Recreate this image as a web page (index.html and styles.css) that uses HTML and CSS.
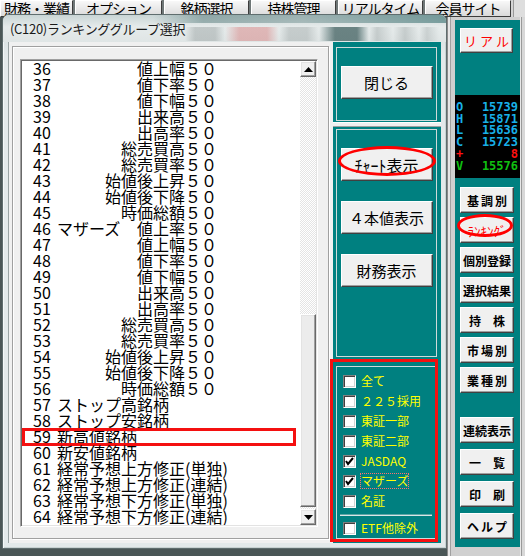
FILE: index.html
```html
<!DOCTYPE html>
<html lang="ja">
<head>
<meta charset="utf-8">
<title>ランキンググループ選択</title>
<link rel="stylesheet" href="styles.css">
</head>
<body>
<div class="menubar">
  <div class="tab t1">財務・業績</div>
  <div class="tab t2">オプション</div>
  <div class="tab t3">銘柄選択</div>
  <div class="tab t4">持株管理</div>
  <div class="tab t5">リアルタイム</div>
  <div class="tab t6">会員サイト</div>
</div>
<div class="main">
  <div class="desk">
    <div class="dialog">
      <div class="titlebar"><span class="title">(C120)ランキンググループ選択</span></div>
      <div class="client">
        <div class="leftpane">
          <div class="groove">
            <div class="listbox">
              <div class="items">
                <div class="row"><span class="num">36</span><span class="field"><span></span><span>値上幅５０</span></span></div>
                <div class="row"><span class="num">37</span><span class="field"><span></span><span>値下率５０</span></span></div>
                <div class="row"><span class="num">38</span><span class="field"><span></span><span>値下幅５０</span></span></div>
                <div class="row"><span class="num">39</span><span class="field"><span></span><span>出来高５０</span></span></div>
                <div class="row"><span class="num">40</span><span class="field"><span></span><span>出高率５０</span></span></div>
                <div class="row"><span class="num">41</span><span class="field"><span></span><span>総売買高５０</span></span></div>
                <div class="row"><span class="num">42</span><span class="field"><span></span><span>総売買率５０</span></span></div>
                <div class="row"><span class="num">43</span><span class="field"><span></span><span>始値後上昇５０</span></span></div>
                <div class="row"><span class="num">44</span><span class="field"><span></span><span>始値後下降５０</span></span></div>
                <div class="row"><span class="num">45</span><span class="field"><span></span><span>時価総額５０</span></span></div>
                <div class="row"><span class="num">46</span><span class="field"><span>マザーズ</span><span>値上率５０</span></span></div>
                <div class="row"><span class="num">47</span><span class="field"><span></span><span>値上幅５０</span></span></div>
                <div class="row"><span class="num">48</span><span class="field"><span></span><span>値下率５０</span></span></div>
                <div class="row"><span class="num">49</span><span class="field"><span></span><span>値下幅５０</span></span></div>
                <div class="row"><span class="num">50</span><span class="field"><span></span><span>出来高５０</span></span></div>
                <div class="row"><span class="num">51</span><span class="field"><span></span><span>出高率５０</span></span></div>
                <div class="row"><span class="num">52</span><span class="field"><span></span><span>総売買高５０</span></span></div>
                <div class="row"><span class="num">53</span><span class="field"><span></span><span>総売買率５０</span></span></div>
                <div class="row"><span class="num">54</span><span class="field"><span></span><span>始値後上昇５０</span></span></div>
                <div class="row"><span class="num">55</span><span class="field"><span></span><span>始値後下降５０</span></span></div>
                <div class="row"><span class="num">56</span><span class="field"><span></span><span>時価総額５０</span></span></div>
                <div class="row"><span class="num">57</span><span class="name">ストップ高銘柄</span></div>
                <div class="row"><span class="num">58</span><span class="name">ストップ安銘柄</span></div>
                <div class="row marked"><span class="num">59</span><span class="name">新高値銘柄</span><span class="rect-mark"></span></div>
                <div class="row"><span class="num">60</span><span class="name">新安値銘柄</span></div>
                <div class="row"><span class="num">61</span><span class="name">経常予想上方修正(単独)</span></div>
                <div class="row"><span class="num">62</span><span class="name">経常予想上方修正(連結)</span></div>
                <div class="row"><span class="num">63</span><span class="name">経常予想下方修正(単独)</span></div>
                <div class="row"><span class="num">64</span><span class="name">経常予想下方修正(連結)</span></div>
              </div>
              <div class="scroll">
                <div class="sarrow"><svg width="9" height="5" viewBox="0 0 9 5"><polygon points="0,5 9,5 4.5,0" fill="#000"/></svg></div>
                <div class="thumb"></div>
                <div class="sarrow"><svg width="9" height="5" viewBox="0 0 9 5"><polygon points="0,0 9,0 4.5,5" fill="#000"/></svg></div>
              </div>
            </div>
          </div>
        </div>
        <div class="tealcol">
          <div class="tpanel1">
            <div class="frame f-close">
              <div class="wbtn">閉じる</div>
            </div>
          </div>
          <div class="tgap"></div>
          <div class="tpanel2">
            <div class="frame f-btns">
              <div class="wbtn ringed chart">ﾁｬｰﾄ表示<span class="ring ring-chart"></span></div>
              <div class="wbtn">４本値表示</div>
              <div class="wbtn">財務表示</div>
            </div>
            <div class="frame f-checks">
              <div class="cb-row"><span class="cb"></span><span class="cb-label">全て</span></div>
              <div class="cb-row"><span class="cb"></span><span class="cb-label">２２５採用</span></div>
              <div class="cb-row"><span class="cb"></span><span class="cb-label">東証一部</span></div>
              <div class="cb-row"><span class="cb"></span><span class="cb-label">東証二部</span></div>
              <div class="cb-row"><span class="cb"><svg width="11" height="11" viewBox="0 0 11 11"><polyline points="2,5 4,8 9,2" fill="none" stroke="#000" stroke-width="2"/></svg></span><span class="cb-label">JASDAQ</span></div>
              <div class="cb-row"><span class="cb"><svg width="11" height="11" viewBox="0 0 11 11"><polyline points="2,5 4,8 9,2" fill="none" stroke="#000" stroke-width="2"/></svg></span><span class="cb-label focus">マザーズ</span></div>
              <div class="cb-row"><span class="cb"></span><span class="cb-label">名証</span></div>
              <div class="sep"></div>
              <div class="cb-row etf"><span class="cb"></span><span class="cb-label">ETF他除外</span></div>
              <span class="rect-mark group-mark"></span>
            </div>
          </div>
        </div>
      </div>
    </div>
  </div>
  <div class="sidebar">
    <div class="steal">
      <div class="sbtn real">リアル</div>
      <div class="quote">
        <div class="qrow"><span>O</span><span>15739</span></div>
        <div class="qrow"><span>H</span><span>15871</span></div>
        <div class="qrow"><span>L</span><span>15636</span></div>
        <div class="qrow"><span>C</span><span>15723</span></div>
        <div class="qrow up"><span>+</span><span>8</span></div>
        <div class="qrow vol"><span>V</span><span>15576</span></div>
      </div>
      <div class="sbtn first wide">基調別</div>
      <div class="sbtn rank">ﾗﾝｷﾝｸﾞ<span class="ring ring-rank"></span></div>
      <div class="sbtn">個別登録</div>
      <div class="sbtn">選択結果</div>
      <div class="sbtn">持　株</div>
      <div class="sbtn wide">市場別</div>
      <div class="sbtn wide">業種別</div>
      <div class="sbtn lower">連続表示</div>
      <div class="sbtn spaced">一　覧</div>
      <div class="sbtn spaced">印　刷</div>
      <div class="sbtn spaced wide">ヘルプ</div>
    </div>
  </div>
</div>
</body>
</html>
```
FILE: styles.css
```css
* { box-sizing: border-box; margin: 0; padding: 0; }
html, body { width: 525px; height: 556px; overflow: hidden; }
body {
  background: #4a5656;
  font-family: "Noto Sans CJK JP", "Noto Sans", sans-serif;
  color: #000;
}

/* top menu */
.menubar {
  display: flex;
  gap: 2px;
  height: 17px;
  overflow: hidden;
  background: linear-gradient(90deg, #6f7777 0 511px, #d4d4d4 511px 513px, #9a9a9a 513px 514px, #dedede 514px);
}
.tab {
  flex: none;
  height: 17px;
  background: linear-gradient(#f8f8f8, #dadada);
  border: 1px solid;
  border-color: #fff #3c3c3c #3c3c3c #fff;
  font-size: 14px;
  letter-spacing: -1px;
  line-height: 15px;
  text-align: center;
  white-space: nowrap;
  overflow: hidden;
}
.t1 { width: 73px; }
.t2 { width: 87px; }
.t3 { width: 85px; }
.t4 { width: 85px; }
.t5 { width: 85px; }
.t6 { width: 86px; }

.main { display: flex; height: 539px; }
.desk { width: 447px; flex: none; padding-left: 2px; }

/* dialog window */
.dialog {
  margin-top: -3px;
  width: 445px;
  height: 535px;
  position: relative;
  z-index: 1;
  border: 1px solid #5f6d6e;
  border-radius: 7px 7px 0 0;
  background: linear-gradient(#cfdada, #e3e9ea 40px);
  padding: 0 5px 5px;
  display: flex;
  flex-direction: column;
  box-shadow: inset 1px 1px #f4f8f8, inset -1px -1px #c8d2d2;
}
.titlebar {
  height: 27px;
  flex: none;
  display: flex;
  align-items: center;
  margin: 0 -5px;
  padding: 0 0 0 7px;
  border-radius: 6px 6px 0 0;
  background:
    linear-gradient(90deg, transparent 182px, rgba(125,135,135,.35) 192px, rgba(125,135,135,.35) 212px, transparent 222px,
      rgba(215,120,120,.45) 236px, rgba(215,120,120,.45) 264px, transparent 276px,
      rgba(125,135,135,.3) 286px, rgba(125,135,135,.3) 304px, transparent 316px,
      rgba(40,75,75,.65) 332px, rgba(40,75,75,.65) 354px, transparent 366px,
      rgba(125,135,135,.3) 374px, transparent 390px, rgba(125,135,135,.3) 402px, transparent 416px,
      rgba(125,135,135,.25) 424px, transparent 436px) 0 12px / 100% 14px no-repeat,
    linear-gradient(90deg, rgba(255,255,255,0) 0 150px, rgba(70,110,110,.45) 200px, rgba(70,110,110,.35) 300px, rgba(40,100,100,.55) 445px) 0 0 / 100% 8px no-repeat,
    linear-gradient(180deg, #c9d5d5, #e6ebeb 12px, #dfe5e5);
}
.title {
  font-size: 13px;
  letter-spacing: -0.3px;
  color: #1a1a1a;
  white-space: nowrap;
}

.client {
  flex: 1;
  display: flex;
  background: #f0f0f0;
  box-shadow: inset 1px 0 #9aa4a4;
}

/* left list area */
.leftpane { width: 325px; flex: none; padding: 4px; }
.groove {
  height: 100%;
  border: 1px solid #a0a0a0;
  box-shadow: inset 1px 1px #fff, 1px 1px #fff;
  padding: 12px 10px 11px 7px;
}
.listbox {
  height: 468px;
  border: 1px solid;
  border-color: #a0a0a0 #fff #fff #a0a0a0;
  padding: 1px;
  background: #fff;
  box-shadow: inset 1px 1px #696969, inset -1px -1px #e3e3e3;
  display: flex;
}
.items { width: 278px; flex: none; padding-left: 11px; overflow: hidden; }
.row {
  display: flex;
  height: 16px;
  line-height: 16px;
  font-size: 16px;
  white-space: nowrap;
  position: relative;
}
.num { width: 24px; flex: none; margin-top: -1px; }
.field { width: 160px; flex: none; display: flex; justify-content: space-between; margin-top: -1px; }
.name { margin-top: -1px; }
.rect-mark {
  position: absolute;
  border: 3px solid #f41010;
  pointer-events: none;
}
.marked .rect-mark { left: -11px; right: 4px; top: -1px; bottom: -1px; }

.scroll {
  width: 16px;
  flex: none;
  display: flex;
  flex-direction: column;
  background: repeating-conic-gradient(#fff 0 25%, #e4e4e4 0 50%) 0 0 / 2px 2px;
}
.sarrow {
  height: 16px;
  flex: none;
  background: #f0f0f0;
  border: 1px solid;
  border-color: #fff #696969 #696969 #fff;
  box-shadow: inset -1px -1px #a0a0a0, inset 1px 1px #e3e3e3;
  display: flex;
  align-items: center;
  justify-content: center;
}
.thumb {
  margin-top: auto;
  margin-bottom: 2px;
  height: 193px;
  background: #ececec;
  border: 1px solid;
  border-color: #fff #696969 #696969 #fff;
  box-shadow: inset -1px -1px #a0a0a0, inset 1px 1px #e3e3e3;
}

/* teal right column */
.tealcol { width: 108px; flex: none; display: flex; flex-direction: column; }
.tpanel1 { height: 80px; flex: none; background: #008080; padding: 5px 4px 1px 3px; }
.tgap { height: 5px; flex: none; background: #f0f0f0; border-top: 1px solid #fff; border-bottom: 1px solid #a0a0a0; }
.tpanel2 {
  flex: 1;
  background: #008080;
  padding: 2px 4px 4px 3px;
  display: flex;
  flex-direction: column;
}
.frame { border: 1px solid #cfdada; }
.f-close { height: 100%; padding-top: 18px; display: flex; justify-content: center; align-items: flex-start; }
.f-btns {
  height: 228px;
  flex: none;
  display: flex;
  flex-direction: column;
  align-items: center;
  gap: 20px;
  padding-top: 18px;
}
.wbtn {
  width: 92px;
  height: 33px;
  flex: none;
  background: #f0f0f0;
  border: 1px solid;
  border-color: #fff #404040 #404040 #fff;
  box-shadow: inset -1px -1px #a0a0a0;
  font-size: 15px;
  display: flex;
  align-items: center;
  justify-content: center;
  white-space: nowrap;
}
.chart { font-size: 16px; }
.ringed { position: relative; }
.ring {
  position: absolute;
  border: 3px solid #f00;
  border-radius: 50%;
  pointer-events: none;
}
.ring-chart { left: -4px; right: -4px; top: -3px; bottom: 4px; }

.f-checks {
  margin-top: 9px;
  height: 173px;
  flex: none;
  padding-top: 4px;
  position: relative;
}
.cb-row {
  height: 20px;
  display: flex;
  align-items: center;
  gap: 5px;
  padding-left: 6px;
}
.cb {
  width: 13px;
  height: 13px;
  flex: none;
  background: #fff;
  border: 1px solid;
  border-color: #808080 #fff #fff #808080;
  box-shadow: inset 1px 1px #404040, inset -1px -1px #d4d4d4;
  display: flex;
  align-items: center;
  justify-content: center;
}
.cb-label {
  color: #ffff00;
  font-size: 12px;
  line-height: 14px;
  white-space: nowrap;
}
.focus { outline: 1px dotted #ff7070; outline-offset: 0; }
.sep {
  width: 92px;
  height: 2px;
  margin: 3px 0 0 3px;
  border-top: 1px solid #5ea6a6;
  border-bottom: 1px solid #d8e6e6;
}
.etf { margin-top: 2px; }
.group-mark { left: -7px; right: -2px; top: -8px; bottom: -4px; }

/* right sidebar */
.sidebar {
  width: 78px;
  flex: none;
  padding: 3px 5px 9px 8px;
  background:
    linear-gradient(90deg, #8a8a8a 0 1px, #e6e6e6 1px 3px, #a0a0a0 3px 4px, #cfcfcf 4px 8px, transparent 8px 73px, #e8e8e8 73px 74px, #9a9a9a 74px 75px, #d8d8d8 75px),
    #d0d0d0;
}
.steal {
  height: 100%;
  background: #008080;
  display: flex;
  flex-direction: column;
  align-items: flex-start;
}
.sbtn {
  width: 54px;
  height: 26px;
  flex: none;
  margin: 4px 0 0 5px;
  background: #f0f0f0;
  border: 1px solid;
  border-color: #fff #404040 #404040 #fff;
  box-shadow: inset -1px -1px #a0a0a0;
  font-size: 12px;
  font-weight: bold;
  display: flex;
  align-items: center;
  justify-content: center;
  white-space: nowrap;
  position: relative;
}
.wide { letter-spacing: 2px; padding-left: 2px; }
.real {
  margin-top: 8px;
  width: 53px;
  height: 25px;
  color: #f00;
  font-weight: normal;
  font-size: 13px;
  letter-spacing: 3px;
  padding-left: 3px;
}
.quote {
  margin-top: 42px;
  width: 65px;
  height: 83px;
  background: #000;
  padding: 7px 2px 0 1px;
  font-family: "DejaVu Sans Mono", "Liberation Mono", monospace;
  font-weight: bold;
  font-size: 12px;
  line-height: 11.7px;
  color: #18b0e8;
}
.qrow { display: flex; justify-content: space-between; }
.qrow.up { color: #ff1010; }
.qrow.vol { color: #10c010; }
.first { margin-top: 9px; }
.rank { color: #f00; font-weight: normal; font-size: 13px; }
.ring-rank { left: -4px; right: 0; top: -4px; bottom: 5px; }
.lower { margin-top: 24px; }
.spaced { margin-top: 6px; }
```
